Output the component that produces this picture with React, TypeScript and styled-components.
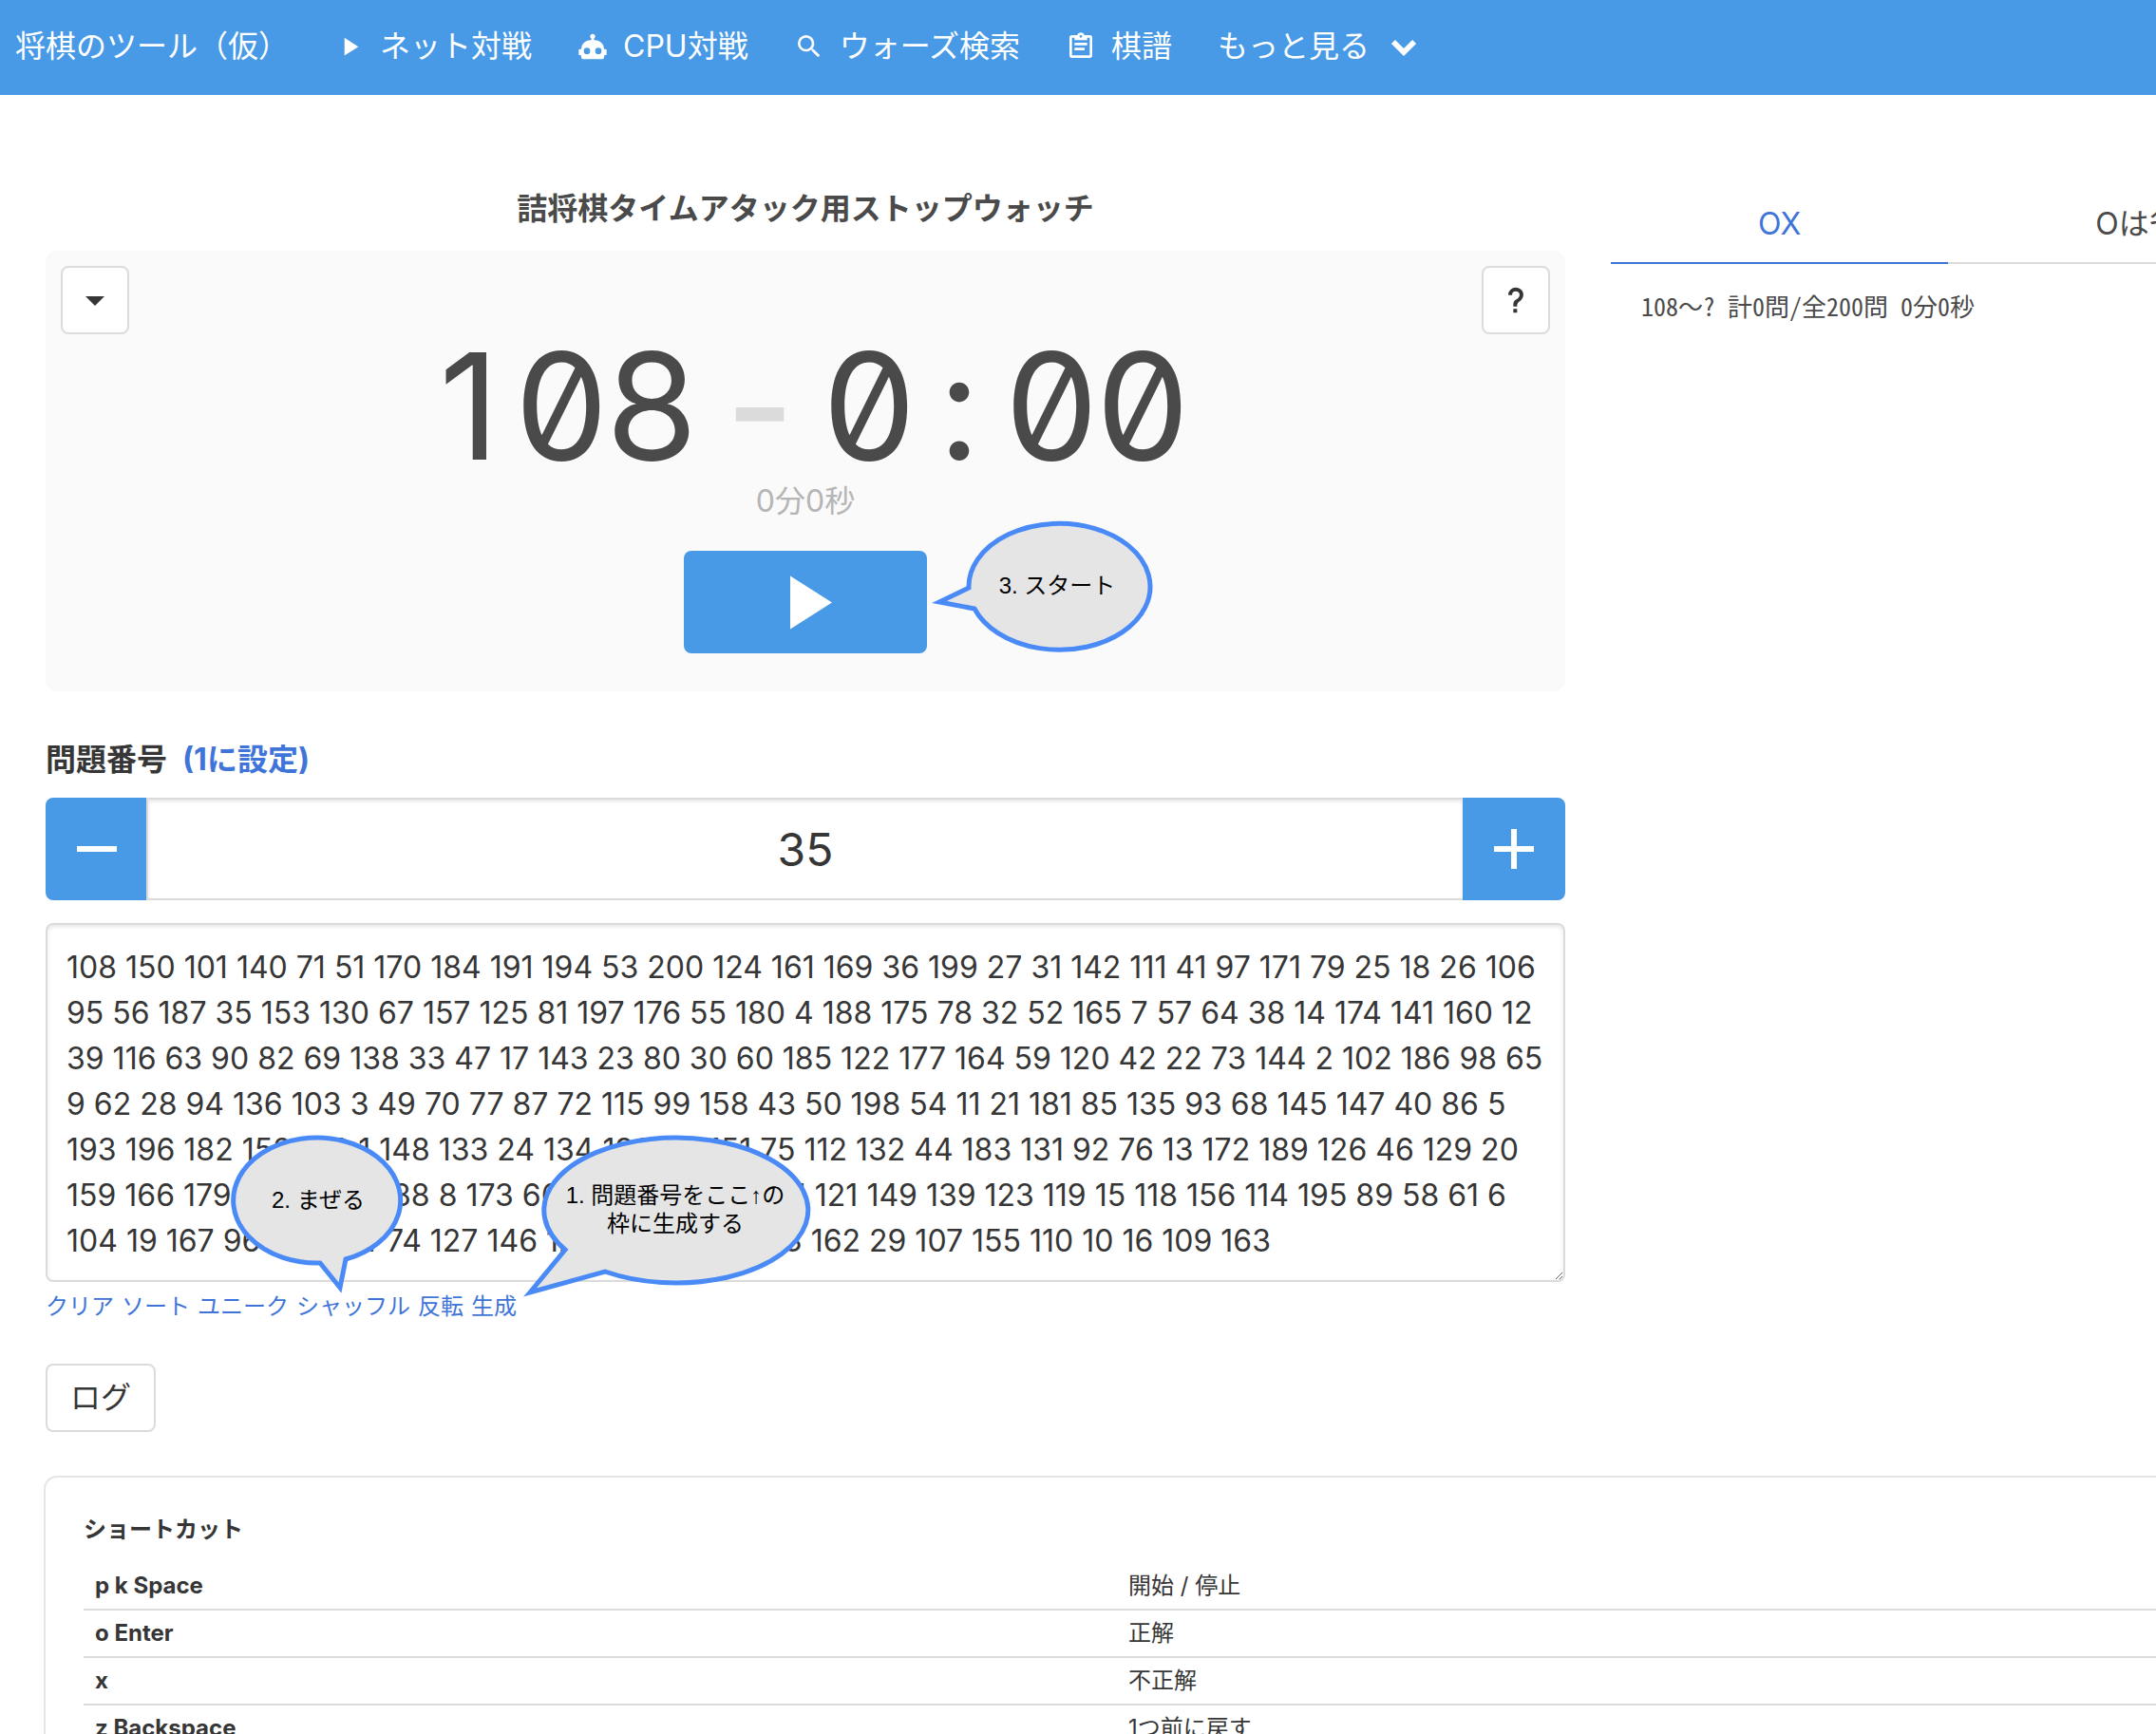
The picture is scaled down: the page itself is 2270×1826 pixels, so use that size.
import React, { useState } from "react";
import styled, { createGlobalStyle } from "styled-components";

const color = {
  primary: "#489ae6",
  link: "#3f74d9",
  text: "#4a4a4a",
  strong: "#363636",
  border: "#dbdbdb",
  muted: "#b5b5b5",
  balloon: "#4a8af7",
};

const GlobalStyle = createGlobalStyle`
  *, *::before, *::after { box-sizing: border-box; }
  html { overflow: hidden; background: #fff; }
  body {
    margin: 0;
    font-family: Inter, "Noto Sans CJK JP", sans-serif;
    font-size: 32px;
    line-height: 48px;
    color: ${color.text};
  }
  button, input, textarea { font: inherit; margin: 0; }
  a { color: ${color.link}; text-decoration: none; }
`;

/* ---------- icons ---------- */

const paths = {
  play: "M8,5.14V19.14L19,12.14L8,5.14Z",
  robot:
    "M12,2A2,2 0 0,1 14,4C14,4.74 13.6,5.39 13,5.73V7H14A7,7 0 0,1 21,14H22A1,1 0 0,1 23,15V18A1,1 0 0,1 22,19H21V20A2,2 0 0,1 19,22H5A2,2 0 0,1 3,20V19H2A1,1 0 0,1 1,18V15A1,1 0 0,1 2,14H3A7,7 0 0,1 10,7H11V5.73C10.4,5.39 10,4.74 10,4A2,2 0 0,1 12,2M7.5,13A2.5,2.5 0 0,0 5,15.5A2.5,2.5 0 0,0 7.5,18A2.5,2.5 0 0,0 10,15.5A2.5,2.5 0 0,0 7.5,13M16.5,13A2.5,2.5 0 0,0 14,15.5A2.5,2.5 0 0,0 16.5,18A2.5,2.5 0 0,0 19,15.5A2.5,2.5 0 0,0 16.5,13Z",
  magnify:
    "M9.5,3A6.5,6.5 0 0,1 16,9.5C16,11.11 15.41,12.59 14.44,13.73L14.71,14H15.5L20.5,19L19,20.5L14,15.5V14.71L13.73,14.44C12.59,15.41 11.11,16 9.5,16A6.5,6.5 0 0,1 3,9.5A6.5,6.5 0 0,1 9.5,3M9.5,5C7,5 5,7 5,9.5C5,12 7,14 9.5,14C12,14 14,12 14,9.5C14,7 12,5 9.5,5Z",
  clipboard:
    "M19,3H14.82C14.4,1.84 13.3,1 12,1C10.7,1 9.6,1.84 9.18,3H5A2,2 0 0,0 3,5V19A2,2 0 0,0 5,21H19A2,2 0 0,0 21,19V5A2,2 0 0,0 19,3M12,3A1,1 0 0,1 13,4A1,1 0 0,1 12,5A1,1 0 0,1 11,4A1,1 0 0,1 12,3M7,7H17V5H19V19H5V5H7V7M17,11H7V9H17V11M15,15H7V13H15V15Z",
  menuDown: "M7,10L12,15L17,10H7Z",
  help: "M10,19H13V22H10V19M12,2C17.35,2.22 19.68,7.62 16.5,11.67C15.67,12.67 14.33,13.33 13.67,14.17C13,15 13,16 13,17H10C10,15.33 10,13.92 10.67,12.92C11.33,11.92 12.67,11.33 13.5,10.67C15.92,8.43 15.32,5.26 12,5A3,3 0 0,0 9,8H6A6,6 0 0,1 12,2Z",
  minus: "M19,13H5V11H19V13Z",
  plus: "M19,13H13V19H11V13H5V11H11V5H13V11H19V13Z",
  chevron: "M2.2,9.7L5.2,6.7L12,13.5L18.8,6.7L21.8,9.7L12,19.5Z",
};

type IconName = keyof typeof paths;

const IconSvg = styled.svg<{ $size: number }>`
  display: block;
  flex: none;
  width: ${(p) => p.$size}px;
  height: ${(p) => p.$size}px;
  fill: currentColor;
`;

const Icon = ({ name, size = 32 }: { name: IconName; size?: number }) => (
  <IconSvg $size={size} viewBox="0 0 24 24" aria-hidden="true">
    <path d={paths[name]} />
  </IconSvg>
);

/* ---------- navigation ---------- */

const Navbar = styled.nav`
  display: flex;
  align-items: stretch;
  height: 100px;
  padding: 0 16px 2px;
  background: ${color.primary};
  white-space: nowrap;
`;

const Brand = styled.a`
  display: flex;
  align-items: center;
  padding-right: 24px;
  color: #fff;
`;

const NavItem = styled.a`
  display: flex;
  align-items: center;
  gap: 16px;
  padding: 0 24px;
  color: #fff;
`;

const NavMenu = styled.button`
  display: flex;
  align-items: center;
  gap: 20px;
  padding: 0 24px;
  border: 0;
  background: none;
  color: #fff;
`;

/* ---------- page layout ---------- */

const Main = styled.main`
  padding: 96px 0 48px 48px;
`;

const Columns = styled.div`
  display: grid;
  grid-template-columns: minmax(0, 1600fr) minmax(0, 574fr);
  gap: 48px;
  margin-bottom: 48px;
`;

const Title = styled.h1`
  margin: 0 0 20px;
  font-size: 32px;
  font-weight: 700;
  line-height: 48px;
  text-align: center;
`;

/* ---------- stopwatch ---------- */

const Panel = styled.section`
  display: flex;
  flex-direction: column;
  align-items: center;
  padding: 16px 16px 40px;
  margin-bottom: 48px;
  border-radius: 12px;
  background: #fafafa;
`;

const PanelBar = styled.div`
  display: flex;
  justify-content: space-between;
  align-self: stretch;
`;

const Button = styled.button`
  display: inline-flex;
  align-items: center;
  justify-content: center;
  min-width: 72px;
  height: 72px;
  padding: 0;
  border: 2px solid ${color.border};
  border-radius: 8px;
  background: #fff;
  color: ${color.strong};
`;

const LogButton = styled(Button)`
  padding: 0 24px;
`;

const Clock = styled.div`
  display: flex;
  font-size: 156px;
  line-height: 152px;
  font-feature-settings: "zero";
`;

const Cell = styled.span`
  width: 96px;
  text-align: center;
`;

const Dash = styled.span`
  width: 132px;
  text-align: center;
  font-weight: 500;
  color: ${color.border};
`;

const Elapsed = styled.div`
  margin-bottom: 28px;
  color: ${color.muted};
`;

const StartArea = styled.div`
  position: relative;
`;

const StartButton = styled.button`
  display: flex;
  align-items: center;
  justify-content: center;
  width: 256px;
  height: 108px;
  padding: 0;
  border: 0;
  border-radius: 8px;
  background: ${color.primary};
  color: #fff;
`;

/* ---------- speech balloons ---------- */

const BalloonBox = styled.div<{ $left: number; $top: number }>`
  position: absolute;
  z-index: 1;
  left: ${(p) => p.$left}px;
  top: ${(p) => p.$top}px;
  pointer-events: none;
`;

const BalloonShape = styled.svg`
  display: block;
  fill: #e5e5e5;
  stroke: ${color.balloon};
  stroke-width: 5;
  stroke-miterlimit: 10;
`;

const BalloonText = styled.div<{ $height: number; $indent: number }>`
  position: absolute;
  top: 0;
  right: 0;
  left: ${(p) => p.$indent}px;
  display: flex;
  align-items: center;
  justify-content: center;
  height: ${(p) => p.$height}px;
  font-family: "Liberation Sans", "Noto Sans CJK JP", sans-serif;
  font-size: 24px;
  line-height: 30px;
  text-align: center;
  white-space: pre;
  color: #000;
`;

type BalloonProps = {
  left: number;
  top: number;
  width: number;
  height: number;
  body: number;
  indent?: number;
  d: string;
  children: React.ReactNode;
};

const Balloon = ({ left, top, width, height, body, indent = 0, d, children }: BalloonProps) => (
  <BalloonBox $left={left} $top={top}>
    <BalloonShape width={width} height={height} viewBox={`0 0 ${width} ${height}`} aria-hidden="true">
      <path d={d} />
    </BalloonShape>
    <BalloonText $height={body} $indent={indent}>
      {children}
    </BalloonText>
  </BalloonBox>
);

/* ---------- problem number form ---------- */

const FieldHead = styled.div`
  display: flex;
  gap: 16px;
  margin-bottom: 16px;
  font-weight: 700;
  color: ${color.strong};
`;

const NumberField = styled.div`
  display: flex;
  height: 108px;
  margin-bottom: 24px;
`;

const StepButton = styled.button<{ $side: "left" | "right" }>`
  display: flex;
  align-items: center;
  justify-content: center;
  width: 108px;
  padding: 0;
  border: 0;
  border-radius: ${(p) => (p.$side === "left" ? "8px 0 0 8px" : "0 8px 8px 0")};
  background: ${color.primary};
  color: #fff;
`;

const NumberInput = styled.input`
  flex: 1;
  min-width: 0;
  && { margin: 0 -2px; }
  padding: 0 16px;
  border: 2px solid ${color.border};
  border-radius: 0;
  background: #fff;
  box-shadow: inset 0 2px 4px rgba(10, 10, 10, 0.1);
  font-size: 48px;
  text-align: center;
  color: ${color.strong};
  outline: none;
`;

const NumberList = styled.textarea`
  display: block;
  width: 100%;
  height: 378px;
  padding: 21px 20px 17px;
  border: 2px solid ${color.border};
  border-radius: 8px;
  background: #fff;
  box-shadow: inset 0 2px 4px rgba(10, 10, 10, 0.1);
  color: ${color.strong};
  overflow: hidden;
  resize: vertical;
  outline: none;
`;

const Actions = styled.div`
  display: flex;
  gap: 8px;
  margin: 8px 0 42px;
  font-size: 24px;
  line-height: 36px;
`;

const Action = styled.span`
  position: relative;
`;

/* ---------- result tabs ---------- */

const Results = styled.aside`
  overflow: hidden;
  white-space: nowrap;
`;

const Tabs = styled.div`
  display: flex;
  margin-bottom: 26px;
`;

const Tab = styled.a<{ $active?: boolean }>`
  flex: none;
  padding: 16px 155px;
  border-bottom: 2px solid ${(p) => (p.$active ? color.link : color.border)};
  color: ${(p) => (p.$active ? color.link : color.text)};
`;

const Summary = styled.div`
  padding-left: 32px;
  font-family: "Noto Sans Mono CJK JP", "Noto Sans CJK JP", monospace;
  font-feature-settings: "hwid";
  font-size: 26px;
  line-height: 36px;
`;

const FullWidth = styled.span`
  font-feature-settings: normal;
`;

/* ---------- shortcuts ---------- */

const ShortcutBox = styled.section`
  padding: 40px 0 40px 40px;
  border-radius: 12px 0 0 12px;
  box-shadow: 0 0 0 2px rgba(10, 10, 10, 0.1);
  font-size: 24px;
  color: ${color.strong};
`;

const ShortcutTitle = styled.h2`
  margin: 0 0 20px;
  font-size: 24px;
  line-height: 30px;
`;

const ShortcutTable = styled.table`
  width: 100%;
  border-collapse: collapse;
  table-layout: fixed;
  line-height: 36px;
  text-align: left;

  th, td {
    padding: 6px 12px;
    border-bottom: 2px solid ${color.border};
  }
  th { width: 1088px; }
`;

const numbers = [
  "108 150 101 140 71 51 170 184 191 194 53 200 124 161 169 36 199 27 31 142 111 41 97 171 79 25 18 26 106",
  "95 56 187 35 153 130 67 157 125 81 197 176 55 180 4 188 175 78 32 52 165 7 57 64 38 14 174 141 160 12",
  "39 116 63 90 82 69 138 33 47 17 143 23 80 30 60 185 122 177 164 59 120 42 22 73 144 2 102 186 98 65",
  "9 62 28 94 136 103 3 49 70 77 87 72 115 99 158 43 50 198 54 11 21 181 85 135 93 68 145 147 40 86 5",
  "193 196 182 152 168 1 148 133 24 134 190 45 151 75 112 132 44 183 131 92 76 13 172 189 126 46 129 20",
  "159 166 179 100 34 83 88 8 173 66 178 84 105 37 91 121 149 139 123 119 15 118 156 114 195 89 58 61 6",
  "104 19 167 96 192 154 74 127 146 128 137 117 48 113 162 29 107 155 110 10 16 109 163",
].join(" ");

const shortcuts = [
  ["p k Space", "開始 / 停止"],
  ["o Enter", "正解"],
  ["x", "不正解"],
  ["z Backspace", "1つ前に戻す"],
];

export default function App() {
  const [current, setCurrent] = useState("35");
  const [list, setList] = useState(numbers);

  return (
    <>
      <GlobalStyle />
      <Navbar>
        <Brand href="#">将棋のツール（仮）</Brand>
        <NavItem href="#"><Icon name="play" />ネット対戦</NavItem>
        <NavItem href="#"><Icon name="robot" />CPU対戦</NavItem>
        <NavItem href="#"><Icon name="magnify" />ウォーズ検索</NavItem>
        <NavItem href="#"><Icon name="clipboard" />棋譜</NavItem>
        <NavMenu type="button">もっと見る<Icon name="chevron" /></NavMenu>
      </Navbar>

      <Main>
        <Columns>
          <div>
            <Title>詰将棋タイムアタック用ストップウォッチ</Title>
            <Panel>
              <PanelBar>
                <Button type="button" aria-label="メニュー"><Icon name="menuDown" size={48} /></Button>
                <Button type="button" aria-label="ヘルプ"><Icon name="help" /></Button>
              </PanelBar>
              <Clock>
                <Cell>1</Cell><Cell>0</Cell><Cell>8</Cell>
                <Dash>-</Dash>
                <Cell>0</Cell><Cell>:</Cell><Cell>0</Cell><Cell>0</Cell>
              </Clock>
              <Elapsed>0分0秒</Elapsed>
              <StartArea>
                <StartButton type="button" aria-label="開始"><Icon name="play" size={96} /></StartButton>
                <Balloon left={260} top={-34} width={236} height={142} body={142} indent={30}
                  d="M9 88L40 73A95.5 66.5 0 1 1 46 95Z">
                  3. スタート
                </Balloon>
              </StartArea>
            </Panel>

            <FieldHead>
              <label htmlFor="current">問題番号</label>
              <a href="#">(1に設定)</a>
            </FieldHead>
            <NumberField>
              <StepButton type="button" $side="left" aria-label="減らす"><Icon name="minus" size={72} /></StepButton>
              <NumberInput id="current" value={current} onChange={(e) => setCurrent(e.target.value)} />
              <StepButton type="button" $side="right" aria-label="増やす"><Icon name="plus" size={72} /></StepButton>
            </NumberField>
            <NumberList aria-label="問題番号の一覧" spellCheck={false} value={list}
              onChange={(e) => setList(e.target.value)} />
            <Actions>
              <Action><a href="#">クリア</a></Action>
              <Action><a href="#">ソート</a></Action>
              <Action><a href="#">ユニーク</a></Action>
              <Action>
                <a href="#">シャッフル</a>
                <Balloon left={-70} top={-164} width={186} height={174} body={140}
                  d="M116 162L95 136A88 66 0 1 1 122 132Z">
                  2. まぜる
                </Balloon>
              </Action>
              <Action><a href="#">反転</a></Action>
              <Action>
                <a href="#">生成</a>
                <Balloon left={54} top={-166} width={306} height={180} body={164} indent={16}
                  d="M8 169L45 124A139 76.5 0 1 1 87 147Z">
                  {"1. 問題番号をここ↑の\n枠に生成する"}
                </Balloon>
              </Action>
            </Actions>
            <LogButton type="button">ログ</LogButton>
          </div>

          <Results>
            <Tabs>
              <Tab href="#" $active>OX</Tab>
              <Tab href="#">Oは省略</Tab>
            </Tabs>
            <Summary>108<FullWidth>〜</FullWidth>? 計0問/全200問 0分0秒</Summary>
          </Results>
        </Columns>

        <ShortcutBox>
          <ShortcutTitle>ショートカット</ShortcutTitle>
          <ShortcutTable>
            <tbody>
              {shortcuts.map(([keys, action]) => (
                <tr key={keys}>
                  <th scope="row">{keys}</th>
                  <td>{action}</td>
                </tr>
              ))}
            </tbody>
          </ShortcutTable>
        </ShortcutBox>
      </Main>
    </>
  );
}
